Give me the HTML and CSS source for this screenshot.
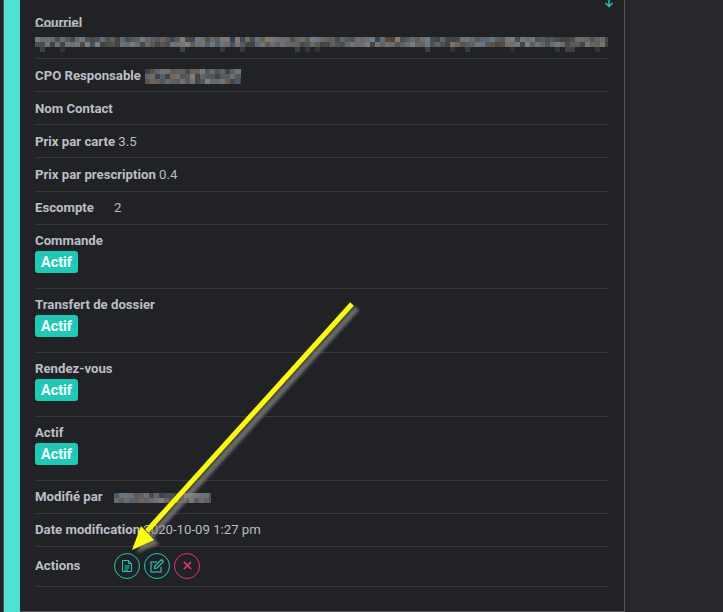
FILE: index.html
```html
<!DOCTYPE html>
<html>
<head>
    <title>Fiche client</title>
    <link rel="stylesheet" href="styles.css">
</head>
<body>
    <div class="page">
        <div class="accent-bar"></div>
        <div class="panel">
            <svg class="sort-icon" width="10" height="8" viewBox="0 0 10 8"><path d="M5 0V6M1.500 3L5 6.500L8.500 3" fill="none" stroke="#1ccab8" stroke-width="1.500"/></svg>
            <div class="row row-mail">
                <div class="label label-cut">Courriel</div>
                <canvas class="blur blur-long" width="573" height="15" data-seed="7" data-sparse="1"></canvas>
            </div>
            <div class="row"><span class="label">CPO Responsable</span><canvas class="blur blur-cpo" width="96" height="15" data-seed="23"></canvas></div>
            <div class="row"><span class="label">Nom Contact</span></div>
            <div class="row"><span class="label">Prix par carte</span> 3.5</div>
            <div class="row row-tall"><span class="label">Prix par prescription</span> 0.4</div>
            <div class="row row-low"><span class="label label-fixed">Escompte</span>2</div>
            <div class="row row-badge">
                <div class="label">Commande</div>
                <span class="badge">Actif</span>
            </div>
            <div class="row row-badge">
                <div class="label">Transfert de dossier</div>
                <span class="badge">Actif</span>
            </div>
            <div class="row row-badge">
                <div class="label">Rendez-vous</div>
                <span class="badge">Actif</span>
            </div>
            <div class="row row-badge">
                <div class="label">Actif</div>
                <span class="badge">Actif</span>
            </div>
            <div class="row row-low"><span class="label label-fixed">Modifié par</span><canvas class="blur blur-mod" width="97" height="10" data-seed="41"></canvas></div>
            <div class="row row-low"><span class="label">Date modification</span> 2020-10-09 1:27 pm</div>
            <div class="row row-actions">
                <span class="label label-fixed">Actions</span>
                <div class="actions">
                    <span class="action-btn">
                        <svg width="10" height="12" viewBox="0 0 10 12" fill="none" stroke="#1ccab8" stroke-width="1"><path d="M.5 .5H6.500L9.500 3.500V11.500H.5ZM6.500 .5V3.500H9.500"/><path d="M2.500 6H7.500M2.500 8H7.500M2.500 10H6"/></svg>
                    </span>
                    <span class="action-btn">
                        <svg width="16" height="16" viewBox="0 0 16 16" fill="none"><path d="M12 9V14H2V4H8" stroke="#17a98c" stroke-width="1.500"/><path d="M6 8L12.500 1.500L14.500 3.500L8 10L5.500 10.500Z" stroke="#1ccab8" stroke-width="1.200"/></svg>
                    </span>
                    <span class="action-btn action-danger">
                        <svg width="9" height="9" viewBox="0 0 9 9" fill="none" stroke="#f0307e" stroke-width="1.700"><path d="M1 1L8 8M8 1L1 8"/></svg>
                    </span>
                </div>
            </div>
        </div>
        <div class="side"></div>
        <svg class="arrow" width="723" height="612" viewBox="0 0 723 612">
            <defs>
                <filter id="soft"><feGaussianBlur stdDeviation="1.500"/></filter>
            </defs>
            <g filter="url(#soft)" opacity="0.700">
                <path d="M357 308L151 536" stroke="#8a8a8a" stroke-width="6" fill="none"/>
                <path d="M137 553L146 530L159 544Z" fill="#8a8a8a"/>
            </g>
            <path d="M352 304L147 531" stroke="#ffff00" stroke-width="5" fill="none"/>
            <path d="M132 550L141 526L154 540Z" fill="#ffff00"/>
        </svg>
    </div>
    <script src="mosaic.js"></script>
</body>
</html>
```

FILE: styles.css
```css
* {
    box-sizing: border-box;
}

html, body {
    margin: 0;
    height: 100%;
}

body {
    overflow: hidden;
    background-color: #26282c;
    font-family: Roboto, Arial, sans-serif;
    font-size: 13.2px;
    color: #b9bcc2;
}

.page {
    position: relative;
    display: flex;
    width: 723px;
    height: 612px;
}

.accent-bar {
    position: relative;
    width: 20px;
    flex: none;
    background-color: #4fe3d4;
    border-left: 4px solid #202226;
}

.accent-bar::before {
    content: "";
    position: absolute;
    top: 0;
    bottom: 0;
    left: -1px;
    width: 1px;
    background-color: #55575b;
}

.panel {
    position: relative;
    width: 605px;
    flex: none;
    padding: 0 16px 0 15px;
    background-color: #202226;
    border-right: 1px solid #55575b;
    border-bottom: 1px solid #55575b;
}

.side {
    flex: 1;
    background-color: #26282c;
}

.sort-icon {
    position: absolute;
    top: 0;
    right: 10px;
}

.row {
    height: 33px;
    line-height: 33px;
    border-bottom: 1px solid #35373b;
    white-space: nowrap;
}

.row-tall {
    height: 34px;
}

.row-low {
    line-height: 31px;
}

.row-mail {
    height: 59px;
    padding-top: 15px;
    line-height: 16px;
}

.row-badge {
    height: 64px;
    padding-top: 7px;
    line-height: 17px;
}

.row-actions {
    display: flex;
    align-items: center;
    height: 40px;
    padding-bottom: 2px;
}

.label {
    font-weight: 700;
    color: #bcbfc6;
}

.label-fixed {
    display: inline-block;
    width: 79px;
}

.label-cut {
    height: 12px;
    overflow: hidden;
    border-bottom: 1px solid #8a8c8f;
    width: 47px;
    line-height: 15px;
}

.blur {
    display: inline-block;
    vertical-align: middle;
}

.blur-long {
    display: block;
    margin-top: 10px;
}

.blur-cpo {
    margin-left: 4px;
}

.badge {
    display: inline-block;
    height: 22px;
    margin-top: 2px;
    padding: 1px 6px 0;
    border-radius: 3px;
    background-color: #1ccab8;
    color: #fff;
    font-size: 14.4px;
    font-weight: 700;
    line-height: 22px;
}

.actions {
    display: flex;
    gap: 4px;
}

.action-btn {
    display: flex;
    align-items: center;
    justify-content: center;
    width: 26px;
    height: 26px;
    border: 1px solid #1ccab8;
    border-radius: 50%;
}

.action-danger {
    border-color: #ec2d7a;
}

.arrow {
    position: absolute;
    top: 0;
    left: 0;
    pointer-events: none;
}
```

FILE: mosaic.js
```js
// Fill the censored fields with blocks of muted colour
function fillMosaic(canvas) {
    const ctx = canvas.getContext("2d");
    const block = 5;
    let seed = parseInt(canvas.dataset.seed);

    function next() {
        seed = (seed * 16807) % 2147483647;
        return seed / 2147483647;
    }

    for (let y = 0; y < canvas.height; y += block) {
        const sparse = canvas.dataset.sparse && y + block >= canvas.height;
        for (let x = 0; x < canvas.width; x += block) {
            next();
            if (sparse && next() > 0.12) {
                continue;
            }
            const grey = sparse ? 45 + next() * 20 : 62 + next() * 62;
            const tint = next() * 24 - 12;
            const r = Math.round(grey - tint);
            const g = Math.round(grey + 2);
            const b = Math.round(grey + tint + 4);
            ctx.fillStyle = "rgb(" + r + "," + g + "," + b + ")";
            ctx.fillRect(x, y, block, block);
        }
    }
}

document.querySelectorAll(".blur").forEach(fillMosaic);
```
